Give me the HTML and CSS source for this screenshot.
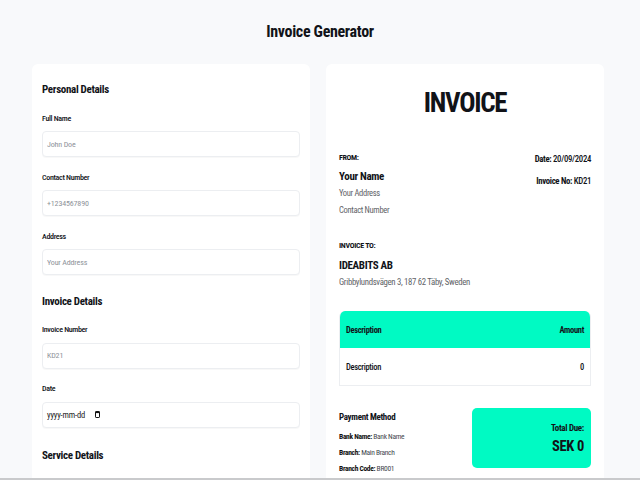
FILE: index.html
```html
<!DOCTYPE html>
<html lang="en">
<head>
<meta charset="utf-8">
<title>Invoice Generator</title>
<link rel="stylesheet" href="styles.css">
</head>
<body>
<h1 class="page-title">Invoice Generator</h1>
<main class="layout">
  <section class="card form-card">
    <h2 class="section-title">Personal Details</h2>
    <div class="field">
      <label class="label">Full Name</label>
      <input class="input" type="text" placeholder="John Doe">
    </div>
    <div class="field">
      <label class="label">Contact Number</label>
      <input class="input" type="text" placeholder="+1234567890">
    </div>
    <div class="field">
      <label class="label">Address</label>
      <input class="input" type="text" placeholder="Your Address">
    </div>
    <h2 class="section-title">Invoice Details</h2>
    <div class="field">
      <label class="label">Invoice Number</label>
      <input class="input" type="text" placeholder="KD21">
    </div>
    <div class="field">
      <label class="label">Date</label>
      <div class="input date-input">
        <span class="date-text">yyyy-mm-dd</span>
        <svg class="cal-icon" width="5" height="7" viewBox="0 0 5 7"><rect x="0.5" y="0.5" width="4" height="6" rx="0.6" fill="none" stroke="#111" stroke-width="1"/><rect x="0.5" y="0.5" width="4" height="1.6" fill="#111"/></svg>
      </div>
    </div>
    <h2 class="section-title section-service">Service Details</h2>
  </section>

  <section class="card invoice-card">
    <h2 class="invoice-title">INVOICE</h2>
    <div class="from-row">
      <div class="from">
        <div class="tiny-label">FROM:</div>
        <div class="party-name">Your Name</div>
        <div class="muted">Your Address</div>
        <div class="muted">Contact Number</div>
      </div>
      <div class="meta">
        <div class="meta-line"><b>Date:</b> 20/09/2024</div>
        <div class="meta-line"><b>Invoice No:</b> KD21</div>
      </div>
    </div>
    <div class="to">
      <div class="tiny-label">INVOICE TO:</div>
      <div class="party-name">IDEABITS AB</div>
      <div class="muted">Gribbylundsvägen 3, 187 62 Täby, Sweden</div>
    </div>
    <div class="items">
      <div class="items-head">
        <span>Description</span>
        <span>Amount</span>
      </div>
      <div class="items-row">
        <span>Description</span>
        <span>0</span>
      </div>
    </div>
    <div class="bottom-row">
      <div class="payment">
        <div class="pay-title">Payment Method</div>
        <div class="pay-line"><b>Bank Name:</b> Bank Name</div>
        <div class="pay-line"><b>Branch:</b> Main Branch</div>
        <div class="pay-line"><b>Branch Code:</b> BR001</div>
      </div>
      <div class="total">
        <div class="total-label">Total Due:</div>
        <div class="total-value">SEK 0</div>
      </div>
    </div>
  </section>
</main>
<div class="viewport-edge"></div>
</body>
</html>
```
FILE: styles.css
```css
* { box-sizing: border-box; }
html, body { height: 100%; }
body {
  margin: 0;
  background: #f8f9fb;
  font-family: Roboto, "Liberation Sans", Arial, sans-serif;
  font-stretch: 75%;
  letter-spacing: -0.02em;
  color: #111318;
  overflow: hidden;
}
.page-title {
  margin: 0;
  padding-top: 22px;
  height: 64px;
  text-align: center;
  font-size: 16px;
  font-weight: bold;
  line-height: 20px;
}
.layout {
  display: grid;
  grid-template-columns: 278px 278px;
  gap: 16px;
  margin-left: 32px;
}
.card {
  background: #fff;
  border-radius: 6px;
  min-height: 440px;
}
.form-card { padding: 18px 10px 0 10px; }
.section-title {
  margin: 0 0 14.5px;
  font-size: 11px;
  line-height: 16px;
  font-weight: bold;
}
.field + .section-title { margin-top: 18.5px; }
.field + .section-service { margin-top: 20px; }
.field { margin-bottom: 14.5px; }
.label {
  display: block;
  font-size: 8px;
  font-weight: 500;
  line-height: 12px;
  margin-bottom: 6.5px;
}
.input {
  display: block;
  width: 100%;
  height: 26px;
  border: 1px solid #eceef1;
  border-radius: 4px;
  padding: 0 4px;
  font-family: inherit;
  font-stretch: 75%;
  letter-spacing: -0.02em;
  font-size: 8px;
  color: #111;
  background: #fff;
  box-shadow: 0 1px 1px rgba(0,0,0,0.03);
}
.input::placeholder { color: #8e9299; }
.date-input {
  display: flex;
  align-items: center;
  gap: 10px;
}
.date-text { font-size: 8.5px; color: #222; }
.cal-icon { display: block; }

.invoice-card { padding: 21px 13px 0 13px; }
.invoice-title {
  margin: 0 0 32px;
  text-align: center;
  font-size: 27px;
  line-height: 36px;
  letter-spacing: -1.3px;
  font-weight: bold;
}
.from-row {
  display: flex;
  justify-content: space-between;
  align-items: flex-start;
}
.tiny-label {
  font-size: 8px;
  font-weight: bold;
  line-height: 10px;
  margin-bottom: 6px;
}
.party-name {
  font-size: 11px;
  font-weight: bold;
  line-height: 16px;
  letter-spacing: -0.03em;
}
.muted {
  font-size: 8.5px;
  line-height: 17px;
  color: #5f6368;
}
.meta { text-align: right; }
.meta-line {
  font-size: 8.75px;
  font-weight: 500;
  line-height: 12px;
  margin-bottom: 10px;
}
.meta-line b { font-weight: bold; }
.to { margin-top: 22px; }
.to .tiny-label { margin-bottom: 7px; }
.to .muted { font-size: 8.75px; }
.items {
  margin-top: 20px;
  border: 1px solid #eceef1;
  border-top: 0;
  border-radius: 6px 6px 0 0;
  overflow: hidden;
}
.items-head, .items-row {
  display: flex;
  justify-content: space-between;
  align-items: center;
  height: 37px;
  padding: 0 6px;
  font-size: 8.5px;
}
.items-head {
  background: #00fac3;
  font-weight: bold;
  margin: 0 -1px;
  padding: 0 7px;
}
.items-row { font-weight: 500; }
.bottom-row {
  display: flex;
  justify-content: space-between;
  align-items: flex-start;
  margin-top: 22px;
}
.payment { padding-top: 3px; }
.pay-title {
  font-size: 9px;
  font-weight: bold;
  line-height: 12px;
  margin-bottom: 6px;
}
.pay-line {
  font-size: 7.5px;
  line-height: 16px;
  color: #45494f;
}
.pay-line b { color: #111; font-weight: bold; }
.total {
  width: 119px;
  height: 60px;
  background: #00fac3;
  border-radius: 5px;
  text-align: right;
  padding: 14px 7px 0 0;
}
.total-label {
  font-size: 9px;
  font-weight: bold;
  line-height: 12px;
  margin-bottom: 5px;
}
.total-value {
  font-size: 14.5px;
  font-weight: bold;
  line-height: 16px;
}
.viewport-edge {
  position: fixed;
  left: 0;
  right: 0;
  bottom: 0;
  height: 2px;
  background: #c9cacc;
}
```
